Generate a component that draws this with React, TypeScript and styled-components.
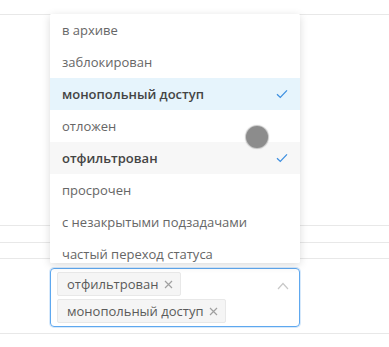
import styled, { createGlobalStyle } from 'styled-components';

const GlobalStyle = createGlobalStyle`
    html, body {
        margin: 0;
        padding: 0;
        background: #fff;
    }
    body {
        font-family: "Open Sans", "Noto Sans", sans-serif;
        font-size: 13px;
        color: #555;
    }
`;

const Page = styled.div`
    position: relative;
    width: 389px;
    height: 347px;
    overflow: hidden;
`;

const Row = styled.div<{ $height: number }>`
    height: ${({ $height }) => $height}px;
    border-bottom: 1px solid #e8e8e8;
`;

const FieldRow = styled.div`
    padding: 9px 0 6px 50px;
    border-bottom: 1px solid #e8e8e8;
`;

const Select = styled.div`
    box-sizing: border-box;
    width: 250px;
    height: 59px;
    display: flex;
    align-items: flex-start;
    justify-content: space-between;
    padding: 3px 10px 3px 6px;
    border: 1px solid #5ea8ef;
    border-radius: 4px;
    box-shadow: 0 0 0 1px rgba(94, 168, 239, 0.25);
`;

const Tags = styled.div`
    display: flex;
    flex-direction: column;
    align-items: flex-start;
    gap: 3px;
`;

const Tag = styled.span`
    box-sizing: border-box;
    display: inline-flex;
    align-items: center;
    gap: 6px;
    height: 24px;
    padding: 0 7px 0 9px;
    background: #f5f5f5;
    border: 1px solid #e8e8e8;
    border-radius: 2px;
    color: #5a5a5a;
    font-size: 13px;
`;

const Close = styled.svg`
    width: 9px;
    height: 9px;
    stroke: #a0a0a0;
    stroke-width: 1.2;
`;

const Arrow = styled.svg`
    margin-top: 10px;
    width: 12px;
    height: 8px;
    stroke: #c8c8c8;
    stroke-width: 1.2;
    fill: none;
`;

const Menu = styled.ul`
    position: absolute;
    top: 14px;
    left: 50px;
    width: 250px;
    height: 249px;
    margin: 0;
    padding: 0;
    list-style: none;
    overflow: hidden;
    background: #fff;
    border-radius: 2px;
    box-shadow: 0 2px 8px rgba(0, 0, 0, 0.15);
`;

const Item = styled.li<{ $selected?: boolean; $active?: boolean }>`
    display: flex;
    align-items: center;
    justify-content: space-between;
    height: 32px;
    padding: 0 12px;
    color: ${({ $selected }) => ($selected ? '#444' : '#666')};
    font-weight: ${({ $selected }) => ($selected ? 600 : 400)};
    background: ${({ $selected, $active }) =>
        $active ? '#e6f4fc' : $selected ? '#f7f7f7' : '#fff'};
`;

const Check = styled.svg`
    width: 12px;
    height: 10px;
    stroke: #3d8fe0;
    stroke-width: 1.3;
    fill: none;
`;

const Touch = styled.div`
    position: absolute;
    left: 246px;
    top: 126px;
    width: 22px;
    height: 22px;
    border-radius: 50%;
    background: #8c8c8c;
    box-shadow: 0 0 1px 1px rgba(140, 140, 140, 0.5);
`;

const options = [
    { label: 'в архиве' },
    { label: 'заблокирован' },
    { label: 'монопольный доступ', selected: true, active: true },
    { label: 'отложен' },
    { label: 'отфильтрован', selected: true },
    { label: 'просрочен' },
    { label: 'с незакрытыми подзадачами' },
    { label: 'частый переход статуса' },
];

const CheckIcon = () => (
    <Check viewBox="0 0 12 10">
        <path d="M1 5.2 L4.3 8.4 L11 1.4" />
    </Check>
);

const CloseIcon = () => (
    <Close viewBox="0 0 9 9">
        <path d="M1 1 L8 8 M8 1 L1 8" />
    </Close>
);

export default function App() {
    return (
        <Page>
            <GlobalStyle />
            <Row $height={14} />
            <Row $height={210} />
            <Row $height={16} />
            <Row $height={15} />
            <FieldRow>
                <Select>
                    <Tags>
                        <Tag>
                            отфильтрован
                            <CloseIcon />
                        </Tag>
                        <Tag>
                            монопольный доступ
                            <CloseIcon />
                        </Tag>
                    </Tags>
                    <Arrow viewBox="0 0 12 8">
                        <path d="M1 7 L6 1.5 L11 7" />
                    </Arrow>
                </Select>
            </FieldRow>

            <Menu>
                {options.map(option => (
                    <Item
                        key={option.label}
                        $selected={option.selected}
                        $active={option.active}
                    >
                        {option.label}
                        {option.selected && <CheckIcon />}
                    </Item>
                ))}
            </Menu>

            <Touch />
        </Page>
    );
}
